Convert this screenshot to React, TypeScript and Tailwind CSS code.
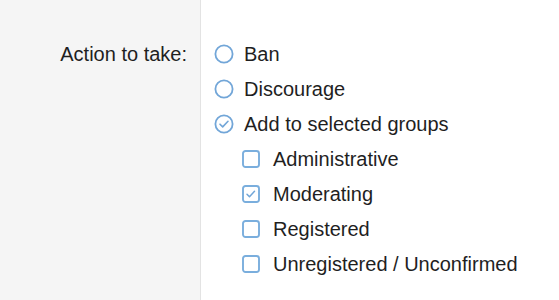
import React from 'react';

const font = { fontFamily: '"Liberation Sans", Arial, sans-serif' };

const Radio = ({ checked }: { checked?: boolean }) => (
  <svg width="20" height="20" viewBox="0 0 20 20" className="shrink-0">
    <circle cx="10" cy="10" r="8.6" fill="white" stroke="#72a6d8" strokeWidth="1.8" />
    {checked && (
      <path d="M6 10.2l2.7 2.7 5.3-5.6" fill="none" stroke="#72a6d8" strokeWidth="1.6" strokeLinecap="round" strokeLinejoin="round" />
    )}
  </svg>
);

const Checkbox = ({ checked }: { checked?: boolean }) => (
  <svg width="18" height="18" viewBox="0 0 18 18" className="shrink-0">
    <rect x="1" y="1" width="16" height="16" rx="2.5" fill="white" stroke="#7aaedd" strokeWidth="1.9" />
    {checked && (
      <path d="M5 9.2l2.5 2.5 5-5.4" fill="none" stroke="#72a6d8" strokeWidth="1.5" strokeLinecap="round" strokeLinejoin="round" />
    )}
  </svg>
);

const radios = [
  { label: 'Ban', checked: false },
  { label: 'Discourage', checked: false },
  { label: 'Add to selected groups', checked: true },
];

const groups = [
  { label: 'Administrative', checked: false },
  { label: 'Moderating', checked: true },
  { label: 'Registered', checked: false },
  { label: 'Unregistered / Unconfirmed', checked: false },
];

export default function App() {
  return (
    <div className="flex h-[300px] w-[559px] bg-white text-[20px] text-[#1f1f1f]" style={font}>
      <div className="w-[201px] shrink-0 bg-[#f5f5f5] border-r border-[#e3e3e3] pt-[36px] pr-[13px]">
        <div className="flex h-[35px] items-center justify-end">Action to take:</div>
      </div>
      <div className="flex-1 pt-[36px] pl-[13px]">
        {radios.map((r) => (
          <div key={r.label} className="flex items-center h-[35px] gap-[10px]">
            <Radio checked={r.checked} />
            <span>{r.label}</span>
          </div>
        ))}
        <div className="pl-[28px]">
          {groups.map((g) => (
            <div key={g.label} className="flex items-center h-[35px] gap-[13px]">
              <Checkbox checked={g.checked} />
              <span>{g.label}</span>
            </div>
          ))}
        </div>
      </div>
    </div>
  );
}
